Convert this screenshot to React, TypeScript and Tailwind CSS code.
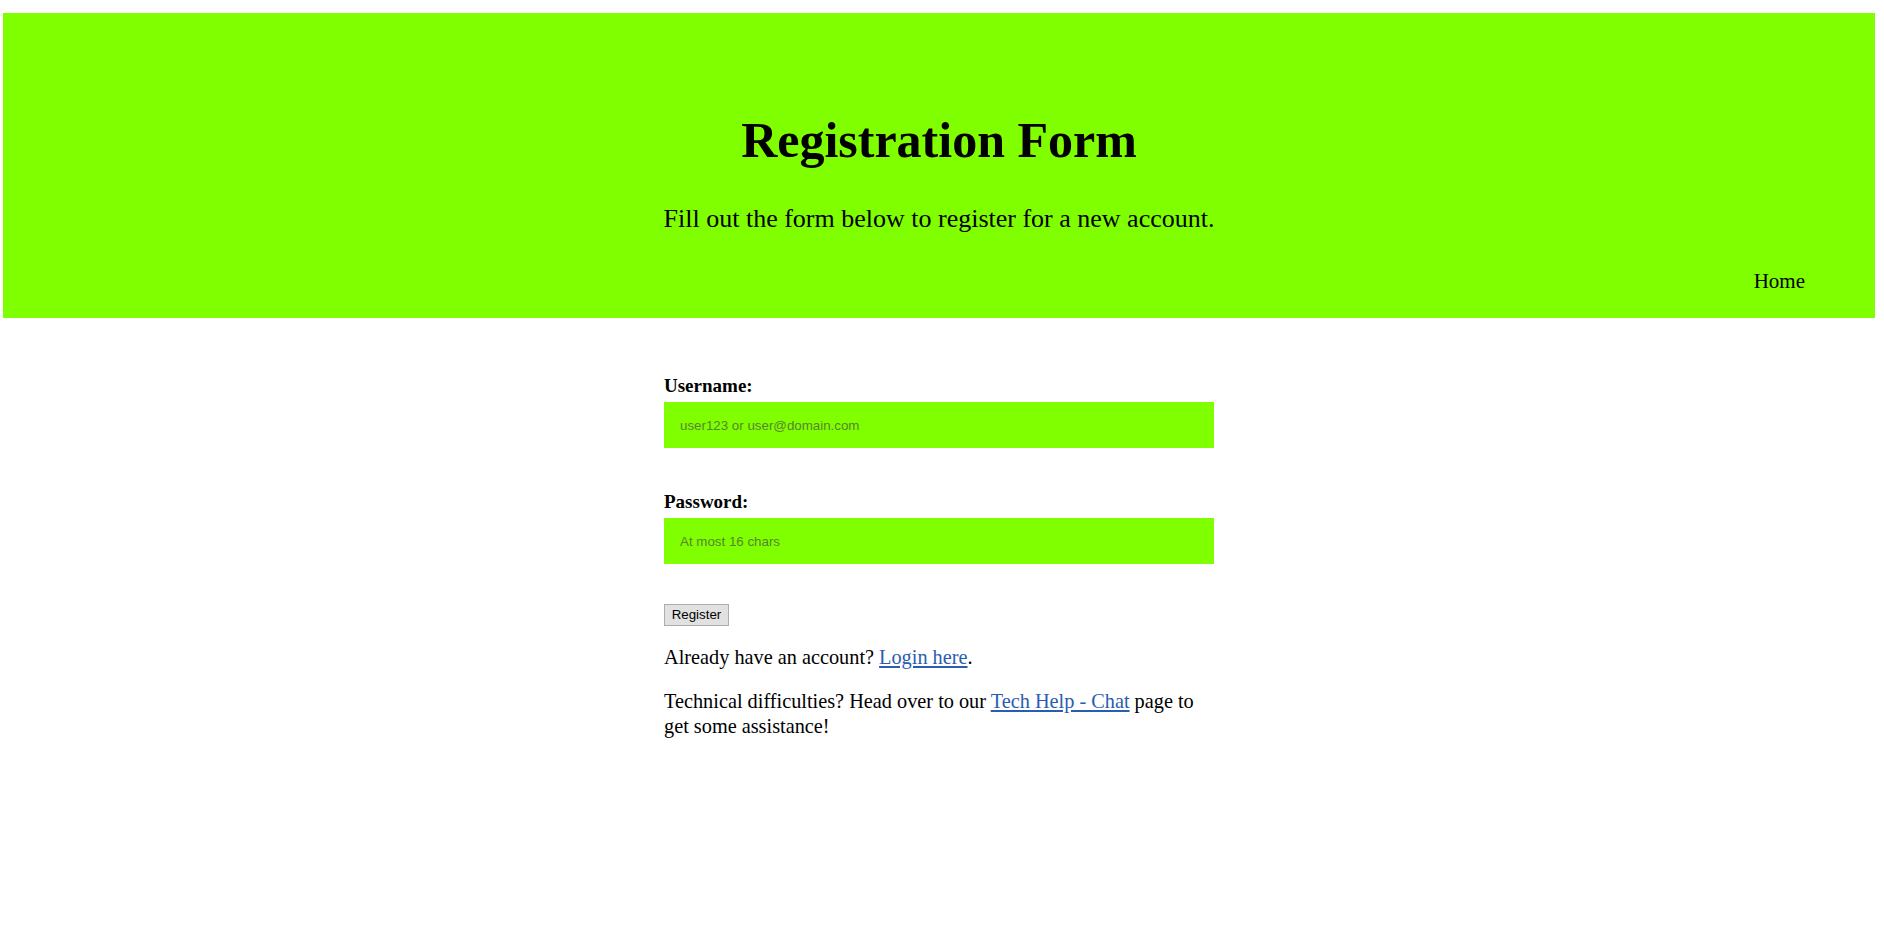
import React from 'react'

const serif = { fontFamily: '"Liberation Serif", "Times New Roman", serif' }
const sans = { fontFamily: '"Liberation Sans", Arial, sans-serif' }

function Header() {
  return (
    <header className="mt-[13px] ml-[3px] w-[1872px] h-[305px] bg-[#80ff00] flex flex-col pt-[99px]">
      <div className="text-center">
        <h1 className="text-[50px] leading-[56px] font-bold text-black">Registration Form</h1>
        <p className="mt-[36px] text-[26px] leading-[30px] text-black">
          Fill out the form below to register for a new account.
        </p>
      </div>
      <nav className="mt-[35px] pr-[70px] text-right">
        <a href="#" className="text-[21px] leading-[24px] text-black no-underline">Home</a>
      </nav>
    </header>
  )
}

function Field({ label, placeholder, type }: { label: string; placeholder: string; type: string }) {
  return (
    <div className="flex flex-col">
      <label className="text-[19px] leading-[24px] font-bold text-black">{label}</label>
      <input
        type={type}
        placeholder={placeholder}
        className="mt-[4px] w-[550px] h-[46px] bg-[#80ff00] px-[16px] text-[13.33px] outline-none placeholder:text-[#56862c]"
        style={sans}
      />
    </div>
  )
}

export default function App() {
  return (
    <div className="min-h-[946px] bg-white" style={serif}>
      <Header />
      <main className="ml-[664px] w-[550px] pt-[56px]">
        <form onSubmit={(e) => e.preventDefault()}>
          <Field label="Username:" placeholder="user123 or user@domain.com" type="text" />
          <div className="mt-[42px]">
            <Field label="Password:" placeholder="At most 16 chars" type="password" />
          </div>
          <button
            type="submit"
            className="mt-[40px] h-[22px] w-[65px] bg-[#e1e1e1] border border-[#adadad] text-[13.33px] text-black leading-none"
            style={sans}
          >
            Register
          </button>
        </form>
        <p className="mt-[19px] text-[20.3px] leading-[25px] text-black">
          Already have an account? <a href="#" className="text-[#2a5db0] underline">Login here</a>.
        </p>
        <p className="mt-[19px] text-[20.3px] leading-[25px] text-black">
          Technical difficulties? Head over to our{' '}
          <a href="#" className="text-[#2a5db0] underline">Tech Help - Chat</a> page to
          <br />
          get some assistance!
        </p>
      </main>
    </div>
  )
}
